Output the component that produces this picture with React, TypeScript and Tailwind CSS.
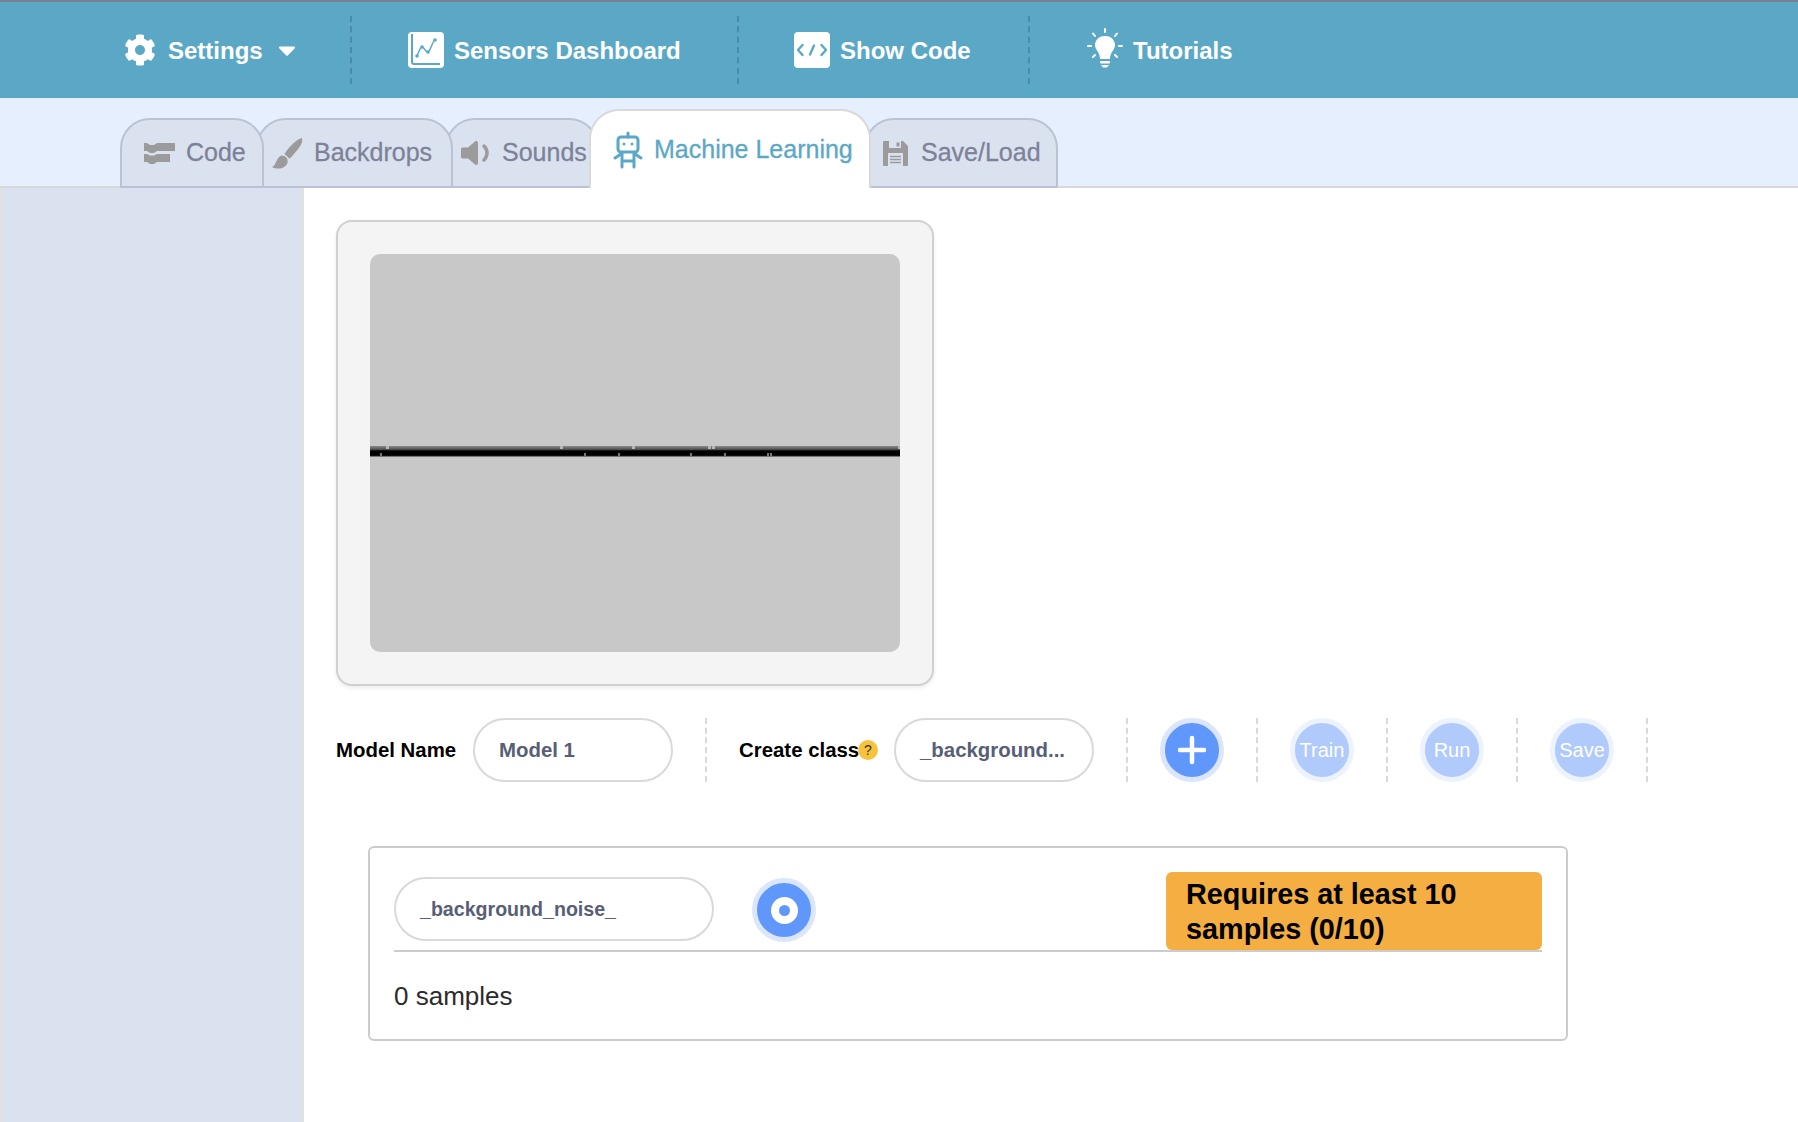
import { FaCog, FaCaretDown } from 'react-icons/fa';

const FONT = "font-['Liberation_Sans',Arial,sans-serif]";

const Divider = () => <div className="h-[68px] border-l-2 border-dashed border-[#4a8ba6]" />;
const RowDivider = () => <div className="h-[64px] border-l-2 border-dashed border-[#d9d9d9]" />;

const SensorsIcon = () => (
  <svg width="36" height="36" viewBox="0 0 36 36">
    <rect width="36" height="36" rx="4" fill="#fff" />
    <path d="M4 2 V30 a2 2 0 0 0 2 2 H32" fill="none" stroke="#5ba8c6" strokeWidth="2" />
    <path d="M9 24 C11 20 12 15 14 15 C16 15 18 21 20 20 C23 18 24 10 27 8" fill="none" stroke="#5ba8c6" strokeWidth="1.500" />
    <circle cx="9" cy="24" r="1.800" fill="#5ba8c6" />
    <circle cx="14" cy="15" r="1.800" fill="#5ba8c6" />
    <circle cx="20" cy="20" r="1.800" fill="#5ba8c6" />
    <circle cx="27" cy="8" r="1.800" fill="#5ba8c6" />
  </svg>
);

const CodeSquareIcon = () => (
  <svg width="36" height="36" viewBox="0 0 36 36">
    <rect width="36" height="36" rx="4" fill="#fff" />
    <path d="M8.500 13 L4 18 L8.500 23 M27.500 13 L32 18 L27.500 23 M20 13.500 L16 22.500" fill="none" stroke="#5ba8c6" strokeWidth="2.400" strokeLinecap="round" strokeLinejoin="round" />
  </svg>
);

const BulbIcon = () => (
  <svg width="36" height="44" viewBox="0 0 36 44">
    <path d="M18 8 C11 8 8 13 8 17 C8 22 13 24 13 31 H23 C23 24 28 22 28 17 C28 13 25 8 18 8 Z" fill="#fff" />
    <rect x="13" y="33" width="10" height="2.500" rx="1" fill="#fff" />
    <path d="M14 37 H22 L20 39.500 H16 Z" fill="#fff" />
    <path d="M18 1 V4 M6 5.500 L8 8 M30 5.500 L28 8 M1 18 H4 M32 18 H35 M6 29 L8 27 M30 29 L28 27" stroke="#fff" strokeWidth="2" strokeLinecap="round" />
  </svg>
);

const BlocksIcon = () => (
  <svg width="31" height="22" viewBox="0 0 31 22" fill="#9b9b9b">
    <path d="M0 1 H3 L6 3 H10 L13 1 H31 V9 H13 L10 11 H6 L3 9 H0 Z" />
    <path d="M0 12 H3 L6 13.500 H10 L13 12 H26 V20 H13 L10 22 H6 L3 20 H0 Z" />
  </svg>
);

const BrushIcon = () => (
  <svg width="33" height="33" viewBox="0 0 32 32" fill="#9b9b9b" className="-ml-[2px] -mr-[1px]">
    <path d="M30 1 C32 6 25 14 18 21 L13 16.500 C18 9 25 2 30 1 Z" />
    <path d="M10 18 C14 18 17 21 16 25 C14 31 6 32 1 29 C5 28 5 20 10 18 Z" />
  </svg>
);

const SpeakerIcon = () => (
  <svg width="32" height="26" viewBox="0 0 32 26" fill="#9b9b9b">
    <path d="M1 9 C1 8 2 7.500 3 7.500 H8 L15 1.500 C16 0.500 18 1 18 3 V23 C18 25 16 25.500 15 24.500 L8 18.500 H3 C2 18.500 1 18 1 17 Z" />
    <path d="M24 6 C28 10 28 16 24 20" fill="none" stroke="#9b9b9b" strokeWidth="3.500" strokeLinecap="round" />
  </svg>
);

const FloppyIcon = () => (
  <svg width="25" height="25" viewBox="0 0 25 25">
    <path d="M0 1 a1 1 0 0 1 1 -1 H20 L25 5 V24 a1 1 0 0 1 -1 1 H1 a1 1 0 0 1 -1 -1 Z" fill="#9b9b9b" />
    <rect x="6" y="0" width="12" height="7" fill="#dbe2ef" />
    <rect x="13.500" y="1.500" width="3" height="4" fill="#9b9b9b" />
    <rect x="5" y="12" width="15" height="13" fill="#dbe2ef" />
    <path d="M7 15.500 H18 M7 18.500 H18 M7 21.500 H18" stroke="#9b9b9b" strokeWidth="1.500" />
  </svg>
);

const RobotIcon = () => (
  <svg width="30" height="38" viewBox="0 0 30 38" fill="none" stroke="#5ba8c6" strokeWidth="3" strokeLinecap="round" strokeLinejoin="round">
    <path d="M15 2 V6" />
    <rect x="5" y="6" width="20" height="15" rx="3" />
    <circle cx="11" cy="13" r="1.500" fill="#5ba8c6" stroke="none" />
    <circle cx="19" cy="13" r="1.500" fill="#5ba8c6" stroke="none" />
    <path d="M8 23 L2 27 M22 23 L28 27" />
    <path d="M9 22 V36 M21 22 V36 M9 30 H21" />
  </svg>
);

const Spectrogram = () => (
  <svg width="530" height="398" viewBox="0 0 530 398" className="block">
    <defs>
      <linearGradient id="band" x1="0" y1="0" x2="0" y2="1">
        <stop offset="0" stopColor="#8a8a8a" />
        <stop offset="0.3" stopColor="#555" />
        <stop offset="0.45" stopColor="#000" />
        <stop offset="0.85" stopColor="#000" />
        <stop offset="1" stopColor="#a8a8a8" />
      </linearGradient>
      <filter id="soft" x="-5%" y="-50%" width="110%" height="200%">
        <feGaussianBlur stdDeviation="0.6" />
      </filter>
    </defs>
    <rect x="0" y="192" width="530" height="11" fill="url(#band)" />
    <g filter="url(#soft)">
      {[16, 190, 262, 338, 342, 528].map((x) => (
        <rect key={x} x={x} y="192" width="3" height="3" fill="#b5b5b5" />
      ))}
      {[10, 214, 248, 320, 354, 397, 400].map((x) => (
        <rect key={x} x={x} y="199" width="2" height="3" fill="#777" />
      ))}
    </g>
  </svg>
);

const TABS = [
  { label: 'Code', icon: <BlocksIcon />, cls: 'w-[144px] pl-[22px] gap-[11px] z-40' },
  { label: 'Backdrops', icon: <BrushIcon />, cls: '-ml-[8px] w-[197px] pl-[15px] gap-[11px] z-30' },
  { label: 'Sounds', icon: <SpeakerIcon />, cls: '-ml-[8px] w-[154px] pl-[13px] gap-[10px] z-20' },
];

export default function App() {
  return (
    <div className={`${FONT} h-[1122px] overflow-hidden bg-white flex flex-col`}>
      {/* Top bar */}
      <div className="h-[98px] shrink-0 flex items-center bg-[#5ba8c6] border-t-2 border-[#7a7f90] text-white font-bold text-[24px]">
        <div className="w-[350px] flex items-center pl-[124px]">
          <FaCog size={32} />
          <span className="ml-[12px] mt-[2px]">Settings</span>
          <FaCaretDown size={28} className="ml-[10px]" />
        </div>
        <Divider />
        <div className="w-[385px] flex items-center pl-[56px]">
          <SensorsIcon />
          <span className="ml-[10px] mt-[2px]">Sensors Dashboard</span>
        </div>
        <Divider />
        <div className="w-[289px] flex items-center pl-[55px]">
          <CodeSquareIcon />
          <span className="ml-[10px] mt-[2px]">Show Code</span>
        </div>
        <Divider />
        <div className="flex items-center pl-[57px]">
          <BulbIcon />
          <span className="ml-[10px] mt-[2px]">Tutorials</span>
        </div>
      </div>

      {/* Tabs */}
      <div className="h-[90px] shrink-0 flex items-end pl-[120px] bg-[#e5effe] border-b-2 border-[#d9d9d9] text-[25px] text-[#7d8299] [-webkit-text-stroke:0.3px_#7d8299]">
        {TABS.map((t) => (
          <div
            key={t.label}
            className={`${t.cls} relative -mb-[2px] h-[70px] flex items-center rounded-t-[30px] border-2 bg-[#dbe2ef] border-[#bac2d3]`}
          >
            {t.icon}
            <span>{t.label}</span>
          </div>
        ))}
        <div className="relative z-50 -ml-[10px] -mb-[2px] w-[282px] h-[79px] pl-[22px] flex items-center gap-[11px] rounded-t-[30px] border-2 border-b-0 border-[#d9d9d9] bg-white text-[#5ba8c6] [-webkit-text-stroke:0.3px_#5ba8c6]">
          <RobotIcon />
          <span>Machine Learning</span>
        </div>
        <div className="relative z-10 -ml-[7px] -mb-[2px] w-[194px] h-[70px] pl-[17px] flex items-center gap-[13px] rounded-t-[30px] border-2 bg-[#dbe2ef] border-[#bac2d3]">
          <FloppyIcon />
          <span>Save/Load</span>
        </div>
      </div>

      <div className="flex-1 flex min-h-0">
        <div className="w-[304px] shrink-0 bg-[#dbe2ef] border-x-2 border-[#e2e2e2]" />

        <div className="flex-1 pl-[32px] pt-[32px]">
          {/* Canvas card */}
          <div className="w-[598px] h-[466px] p-[32px] rounded-[16px] border-2 border-[#d0d0d0] bg-[#f4f4f4] shadow-[0_2px_4px_rgba(0,0,0,0.08)]">
            <div className="w-[530px] h-[398px] rounded-[10px] overflow-hidden bg-[#c8c8c8]">
              <Spectrogram />
            </div>
          </div>

          {/* Model controls */}
          <div className="mt-[32px] h-[64px] flex items-center text-[20.4px]">
            <span className="font-bold text-black w-[137px]">Model Name</span>
            <div className="w-[200px] h-[64px] pl-[24px] flex items-center rounded-full border-2 border-[#d9d9d9] text-[#575e75] font-bold">
              Model 1
            </div>
            <div className="ml-[32px] mr-[32px]"><RowDivider /></div>
            <span className="font-bold text-black w-[119px] whitespace-nowrap">Create class</span>
            <span className="w-[20px] h-[20px] rounded-full bg-[#f9c23c] text-[14px] flex items-center justify-center text-[#333]">?</span>
            <div className="ml-[16px] w-[200px] h-[64px] pl-[24px] flex items-center rounded-full border-2 border-[#d9d9d9] text-[#575e75] font-bold">
              _background...
            </div>
            <div className="ml-[32px] mr-[32px]"><RowDivider /></div>
            <button className="w-[64px] h-[64px] rounded-full border-[5px] border-[#dbe6fd] bg-[#5f97fb] flex items-center justify-center">
              <svg width="28" height="30" viewBox="0 0 28 30">
                <path d="M14 3 V27 M2 15 H26" stroke="#fff" strokeWidth="4.500" strokeLinecap="round" />
              </svg>
            </button>
            {['Train', 'Run', 'Save'].map((label) => (
              <div key={label} className="flex items-center">
                <div className="ml-[32px] mr-[32px]"><RowDivider /></div>
                <button className="w-[64px] h-[64px] rounded-full border-[5px] border-[#edf3fe] bg-[#b0cafb] text-white text-[20px] flex items-center justify-center">
                  {label}
                </button>
              </div>
            ))}
            <div className="ml-[32px]"><RowDivider /></div>
          </div>

          {/* Class panel */}
          <div className="mt-[64px] ml-[32px] w-[1200px] h-[195px] px-[24px] pt-[24px] rounded-[6px] border-2 border-[#cccccc]">
            <div className="h-[80px] flex items-start border-b-2 border-[#cccccc]">
              <div className="mt-[5px] w-[320px] h-[64px] pl-[24px] pt-[2px] flex items-center rounded-full border-2 border-[#d9d9d9] text-[19.6px] text-[#575e75] font-bold">
                _background_noise_
              </div>
              <button className="ml-[38px] mt-[6px] w-[64px] h-[64px] rounded-full border-[5px] border-[#dbe6fd] bg-[#5f97fb] flex items-center justify-center">
                <span className="w-[27px] h-[27px] rounded-full bg-white flex items-center justify-center">
                  <span className="w-[11px] h-[11px] rounded-full bg-[#5f97fb]" />
                </span>
              </button>
              <div className="ml-auto w-[376px] h-[78px] px-[20px] pt-[5px] rounded-[6px] bg-[#f4ae42] text-black font-bold text-[28.8px] leading-[35px]">
                Requires at least 10 samples (0/10)
              </div>
            </div>
            <div className="mt-[28px] text-[26px] leading-[32px] text-[#2b2b2b]">0 samples</div>
          </div>
        </div>
      </div>
    </div>
  );
}
